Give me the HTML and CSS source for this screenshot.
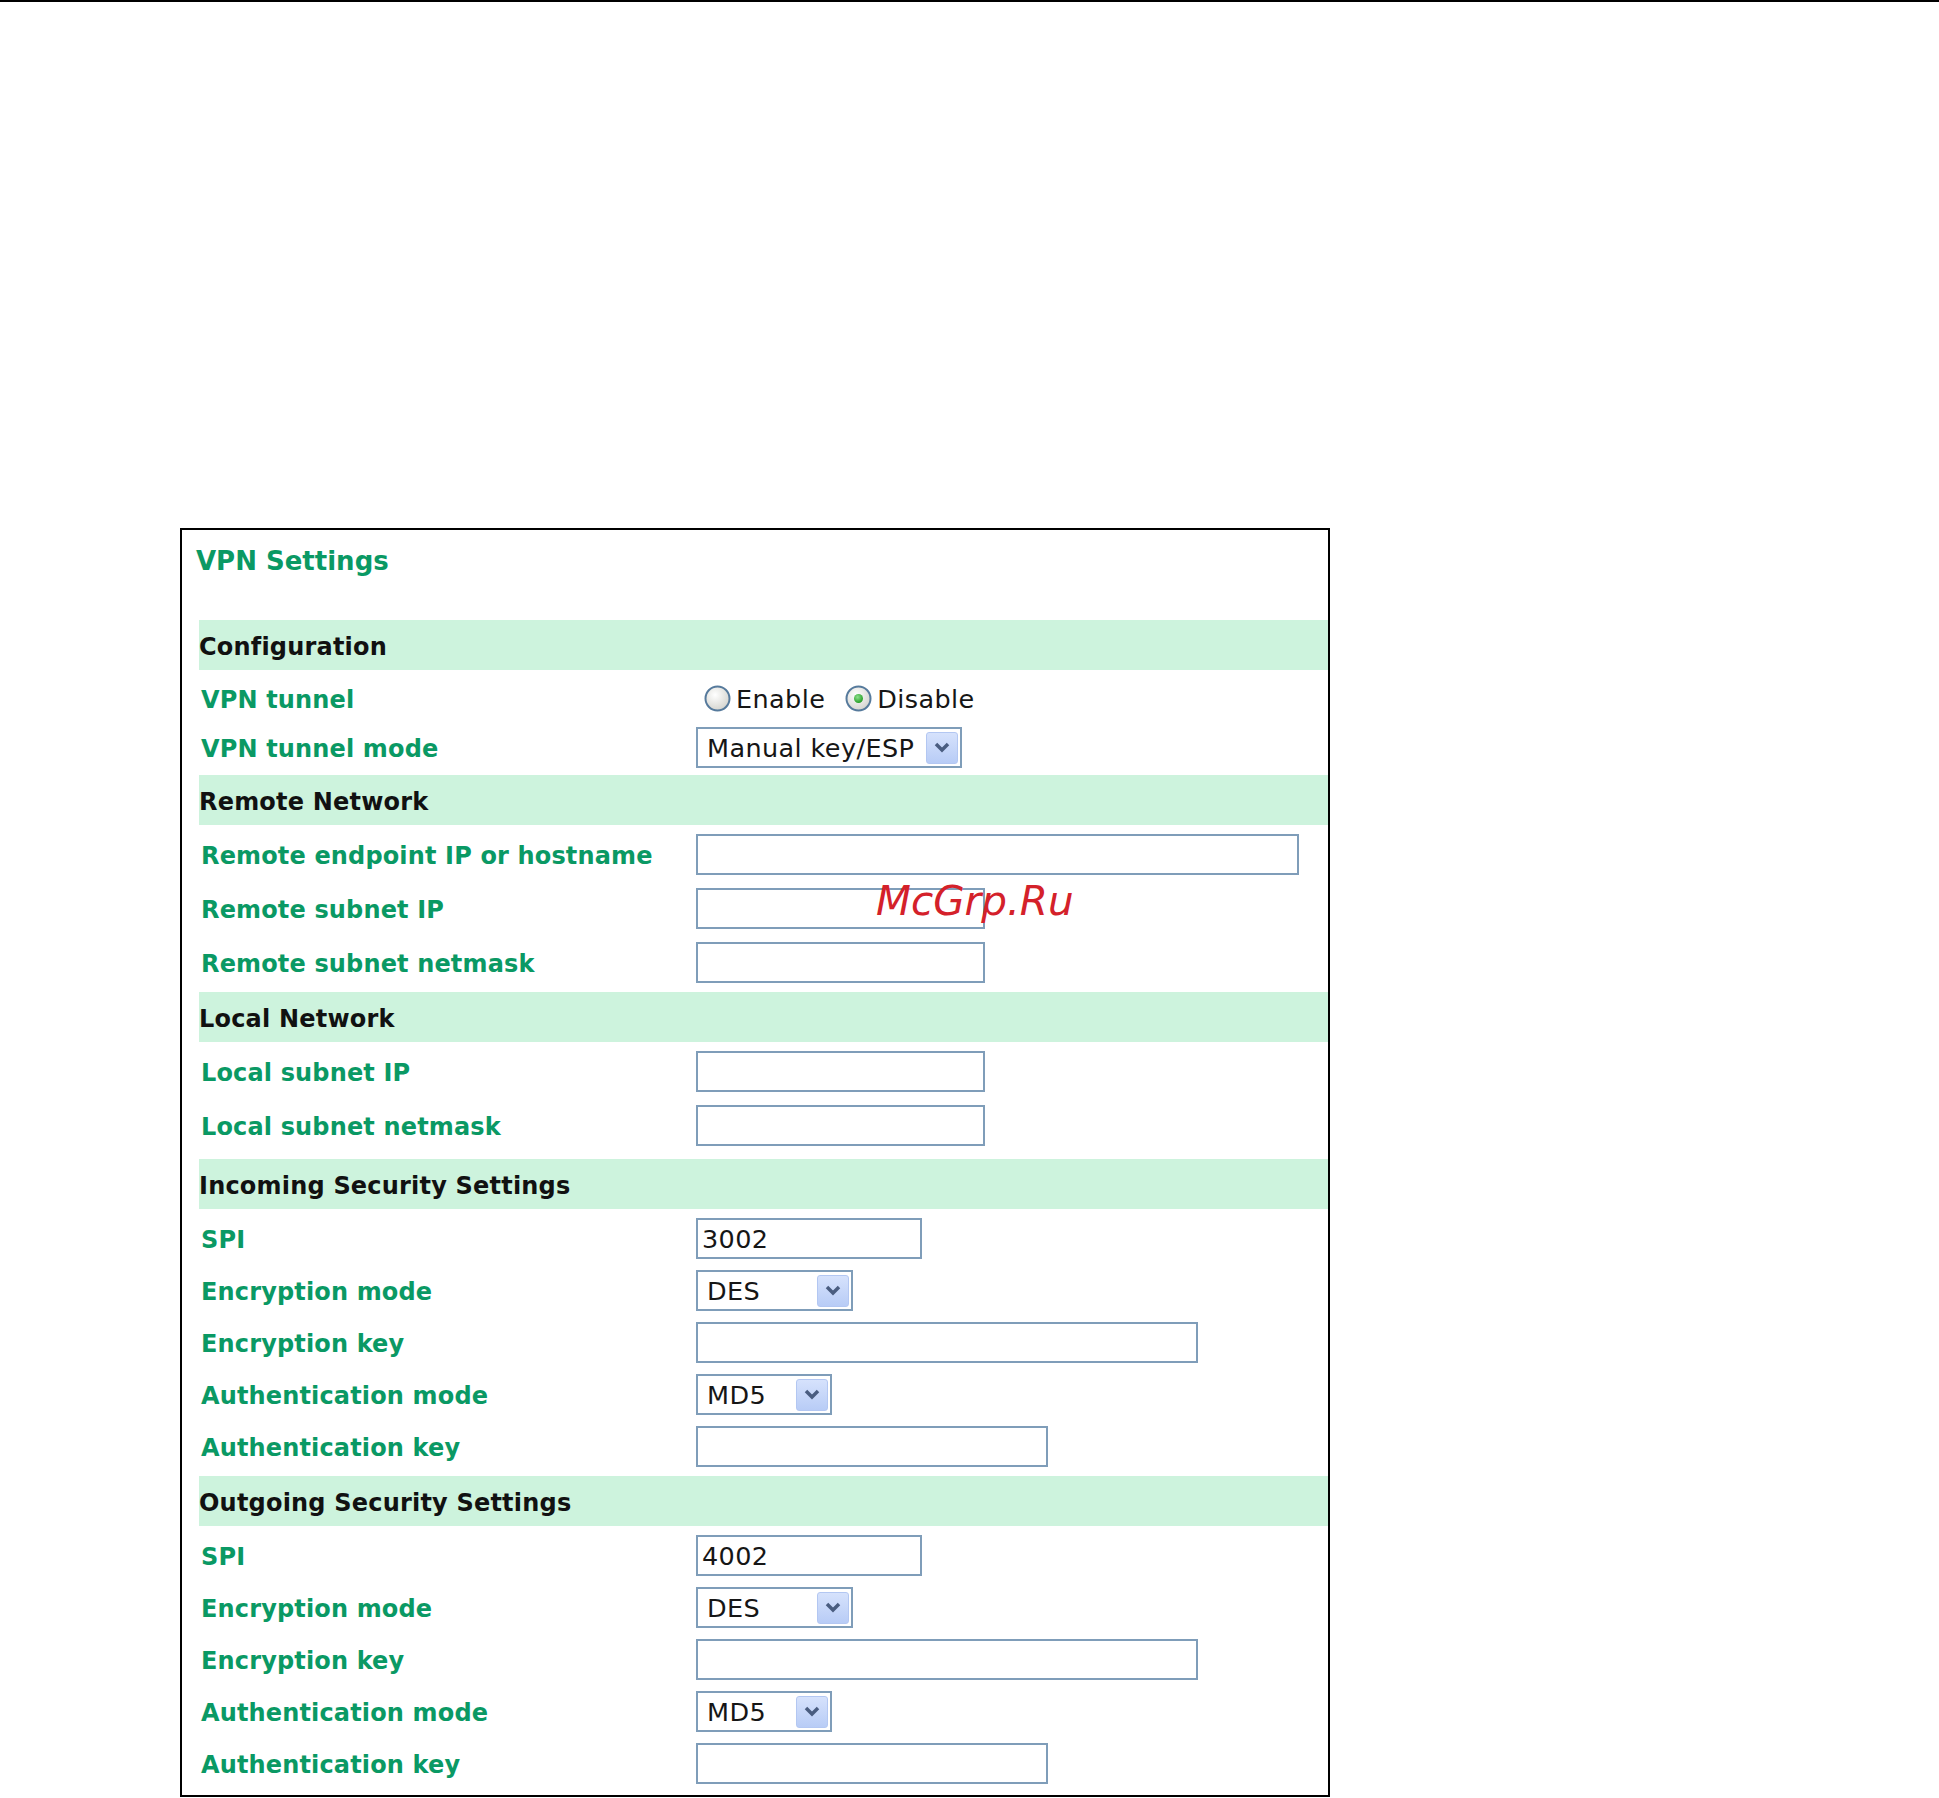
FILE: index.html
```html
<!DOCTYPE html>
<html lang="en">
<head>
    <meta charset="UTF-8">
    <title>VPN Settings</title>
    <link rel="stylesheet" href="styles.css">
</head>
<body>

    <div class="top-rule"></div>

    <div class="panel">
        <div class="panel-title">VPN Settings</div>

        <div class="form">
            <!-- Configuration -->
            <div class="section">
                <div class="band">Configuration</div>
                <div class="row row-radio">
                    <div class="label">VPN tunnel</div>
                    <div class="radios">
                        <label class="radio-opt">
                            <svg class="radio" width="27" height="27" viewBox="0 0 27 27">
                                <defs>
                                    <radialGradient id="radioFill" cx="40%" cy="35%" r="70%">
                                        <stop offset="0" stop-color="#ffffff"/>
                                        <stop offset="1" stop-color="#d2d2cc"/>
                                    </radialGradient>
                                    <radialGradient id="dotFill" cx="40%" cy="35%" r="70%">
                                        <stop offset="0" stop-color="#8fe08f"/>
                                        <stop offset="1" stop-color="#1c9a1c"/>
                                    </radialGradient>
                                </defs>
                                <circle cx="13.5" cy="13.5" r="12" fill="url(#radioFill)" stroke="#567a9c" stroke-width="2"/>
                            </svg>
                            <span>Enable</span>
                        </label>
                        <label class="radio-opt">
                            <svg class="radio" width="27" height="27" viewBox="0 0 27 27">
                                <circle cx="13.5" cy="13.5" r="12" fill="url(#radioFill)" stroke="#567a9c" stroke-width="2"/>
                                <circle cx="13.5" cy="13.5" r="4.5" fill="url(#dotFill)"/>
                            </svg>
                            <span>Disable</span>
                        </label>
                    </div>
                </div>
                <div class="row row-mode">
                    <div class="label">VPN tunnel mode</div>
                    <div class="select select-mode">
                        <span>Manual key/ESP</span>
                        <span class="select-btn"><svg width="16" height="11" viewBox="0 0 16 11"><polyline points="2,2 8,8 14,2" fill="none" stroke="#4a5d80" stroke-width="3.5"/></svg></span>
                    </div>
                </div>
            </div>

            <!-- Remote Network -->
            <div class="section section-remote">
                <div class="band">Remote Network</div>
                <div class="row">
                    <div class="label">Remote endpoint IP or hostname</div>
                    <input type="text" class="field field-host">
                </div>
                <div class="row">
                    <div class="label">Remote subnet IP</div>
                    <input type="text" class="field field-ip">
                </div>
                <div class="row">
                    <div class="label">Remote subnet netmask</div>
                    <input type="text" class="field field-ip">
                </div>
            </div>

            <!-- Local Network -->
            <div class="section section-local">
                <div class="band">Local Network</div>
                <div class="row">
                    <div class="label">Local subnet IP</div>
                    <input type="text" class="field field-ip">
                </div>
                <div class="row">
                    <div class="label">Local subnet netmask</div>
                    <input type="text" class="field field-ip">
                </div>
            </div>

            <!-- Incoming Security Settings -->
            <div class="section section-incoming">
                <div class="band">Incoming Security Settings</div>
                <div class="row row-tight">
                    <div class="label">SPI</div>
                    <input type="text" class="field field-spi" value="3002">
                </div>
                <div class="row row-tight">
                    <div class="label">Encryption mode</div>
                    <div class="select select-des">
                        <span>DES</span>
                        <span class="select-btn"><svg width="16" height="11" viewBox="0 0 16 11"><polyline points="2,2 8,8 14,2" fill="none" stroke="#4a5d80" stroke-width="3.5"/></svg></span>
                    </div>
                </div>
                <div class="row row-tight">
                    <div class="label">Encryption key</div>
                    <input type="text" class="field field-key">
                </div>
                <div class="row row-tight">
                    <div class="label">Authentication mode</div>
                    <div class="select select-md5">
                        <span>MD5</span>
                        <span class="select-btn"><svg width="16" height="11" viewBox="0 0 16 11"><polyline points="2,2 8,8 14,2" fill="none" stroke="#4a5d80" stroke-width="3.5"/></svg></span>
                    </div>
                </div>
                <div class="row row-tight">
                    <div class="label">Authentication key</div>
                    <input type="text" class="field field-authkey">
                </div>
            </div>

            <!-- Outgoing Security Settings -->
            <div class="section">
                <div class="band">Outgoing Security Settings</div>
                <div class="row row-tight">
                    <div class="label">SPI</div>
                    <input type="text" class="field field-spi" value="4002">
                </div>
                <div class="row row-tight">
                    <div class="label">Encryption mode</div>
                    <div class="select select-des">
                        <span>DES</span>
                        <span class="select-btn"><svg width="16" height="11" viewBox="0 0 16 11"><polyline points="2,2 8,8 14,2" fill="none" stroke="#4a5d80" stroke-width="3.5"/></svg></span>
                    </div>
                </div>
                <div class="row row-tight">
                    <div class="label">Encryption key</div>
                    <input type="text" class="field field-key">
                </div>
                <div class="row row-tight">
                    <div class="label">Authentication mode</div>
                    <div class="select select-md5">
                        <span>MD5</span>
                        <span class="select-btn"><svg width="16" height="11" viewBox="0 0 16 11"><polyline points="2,2 8,8 14,2" fill="none" stroke="#4a5d80" stroke-width="3.5"/></svg></span>
                    </div>
                </div>
                <div class="row row-tight">
                    <div class="label">Authentication key</div>
                    <input type="text" class="field field-authkey">
                </div>
            </div>
        </div>

        <div class="watermark">McGrp.Ru</div>
    </div>

</body>
</html>
```

FILE: styles.css
```css
* {
    box-sizing: border-box;
}

body {
    margin: 0;
    font-family: "DejaVu Sans", Verdana, sans-serif;
    background-color: #ffffff;
}

.top-rule {
    height: 2px;
    background-color: #000000;
}

.panel {
    position: relative;
    margin: 526px 0 0 180px;
    width: 1150px;
    height: 1269px;
    border: 2px solid #000000;
    overflow: hidden;
}

.panel-title {
    margin: 16px 0 0 14px;
    font-size: 26px;
    line-height: 30px;
    font-weight: bold;
    color: #0a9964;
}

.form {
    margin: 44px 0 0 17px;
}

.band {
    display: flex;
    align-items: center;
    height: 50px;
    padding-top: 4px;
    background-color: #cdf3dd;
    font-size: 24px;
    font-weight: bold;
    letter-spacing: 0.2px;
    color: #111111;
}

.row {
    display: grid;
    grid-template-columns: 497px 1fr;
    align-items: center;
    padding: 9px 0 4px;
}

.row-tight {
    padding-bottom: 2px;
}

.row-radio {
    padding: 12px 0 3px;
}

.row-mode {
    padding: 9px 0 7px;
}

.section-remote {
    padding-bottom: 5px;
}

.section-local {
    padding-bottom: 9px;
}

.section-incoming {
    padding-bottom: 7px;
}

.label {
    padding: 3px 0 0 2px;
    font-size: 24px;
    line-height: 30px;
    font-weight: bold;
    letter-spacing: 0.15px;
    color: #0a9964;
}

/* text boxes */
.field {
    display: block;
    height: 41px;
    margin: 0;
    padding: 0 4px;
    border: 2px solid #7f9db9;
    border-radius: 0;
    font-family: "DejaVu Sans", Verdana, sans-serif;
    font-size: 25.5px;
    letter-spacing: 0.4px;
    color: #161616;
    background-color: #ffffff;
    outline: none;
}

.field-host { width: 603px; }
.field-ip { width: 289px; }
.field-spi { width: 226px; }
.field-key { width: 502px; }
.field-authkey { width: 352px; }

/* drop-down boxes */
.select {
    display: flex;
    align-items: center;
    justify-content: space-between;
    height: 41px;
    padding: 0 2px 0 9px;
    border: 2px solid #7f9db9;
    font-size: 25.5px;
    letter-spacing: 0.4px;
    color: #161616;
    background-color: #ffffff;
}

.select-mode { width: 266px; }
.select-des { width: 157px; }
.select-md5 { width: 136px; }

.select-btn {
    display: flex;
    align-items: center;
    justify-content: center;
    width: 32px;
    height: 32px;
    border: 1px solid #b3c7f2;
    border-radius: 3px;
    background: linear-gradient(#d6e2fc, #b8ccf6);
}

/* radio buttons */
.radios {
    display: flex;
    align-items: center;
    height: 30px;
    padding-left: 8px;
    font-size: 25.5px;
    line-height: 30px;
    letter-spacing: 0.4px;
    color: #161616;
}

.radio-opt {
    display: flex;
    align-items: center;
    gap: 5px;
    margin-right: 20px;
}

.radio {
    display: block;
}

.watermark {
    position: absolute;
    left: 694px;
    top: 351px;
    font-size: 40.5px;
    line-height: 40px;
    font-style: italic;
    color: #d4212a;
    pointer-events: none;
}
```
